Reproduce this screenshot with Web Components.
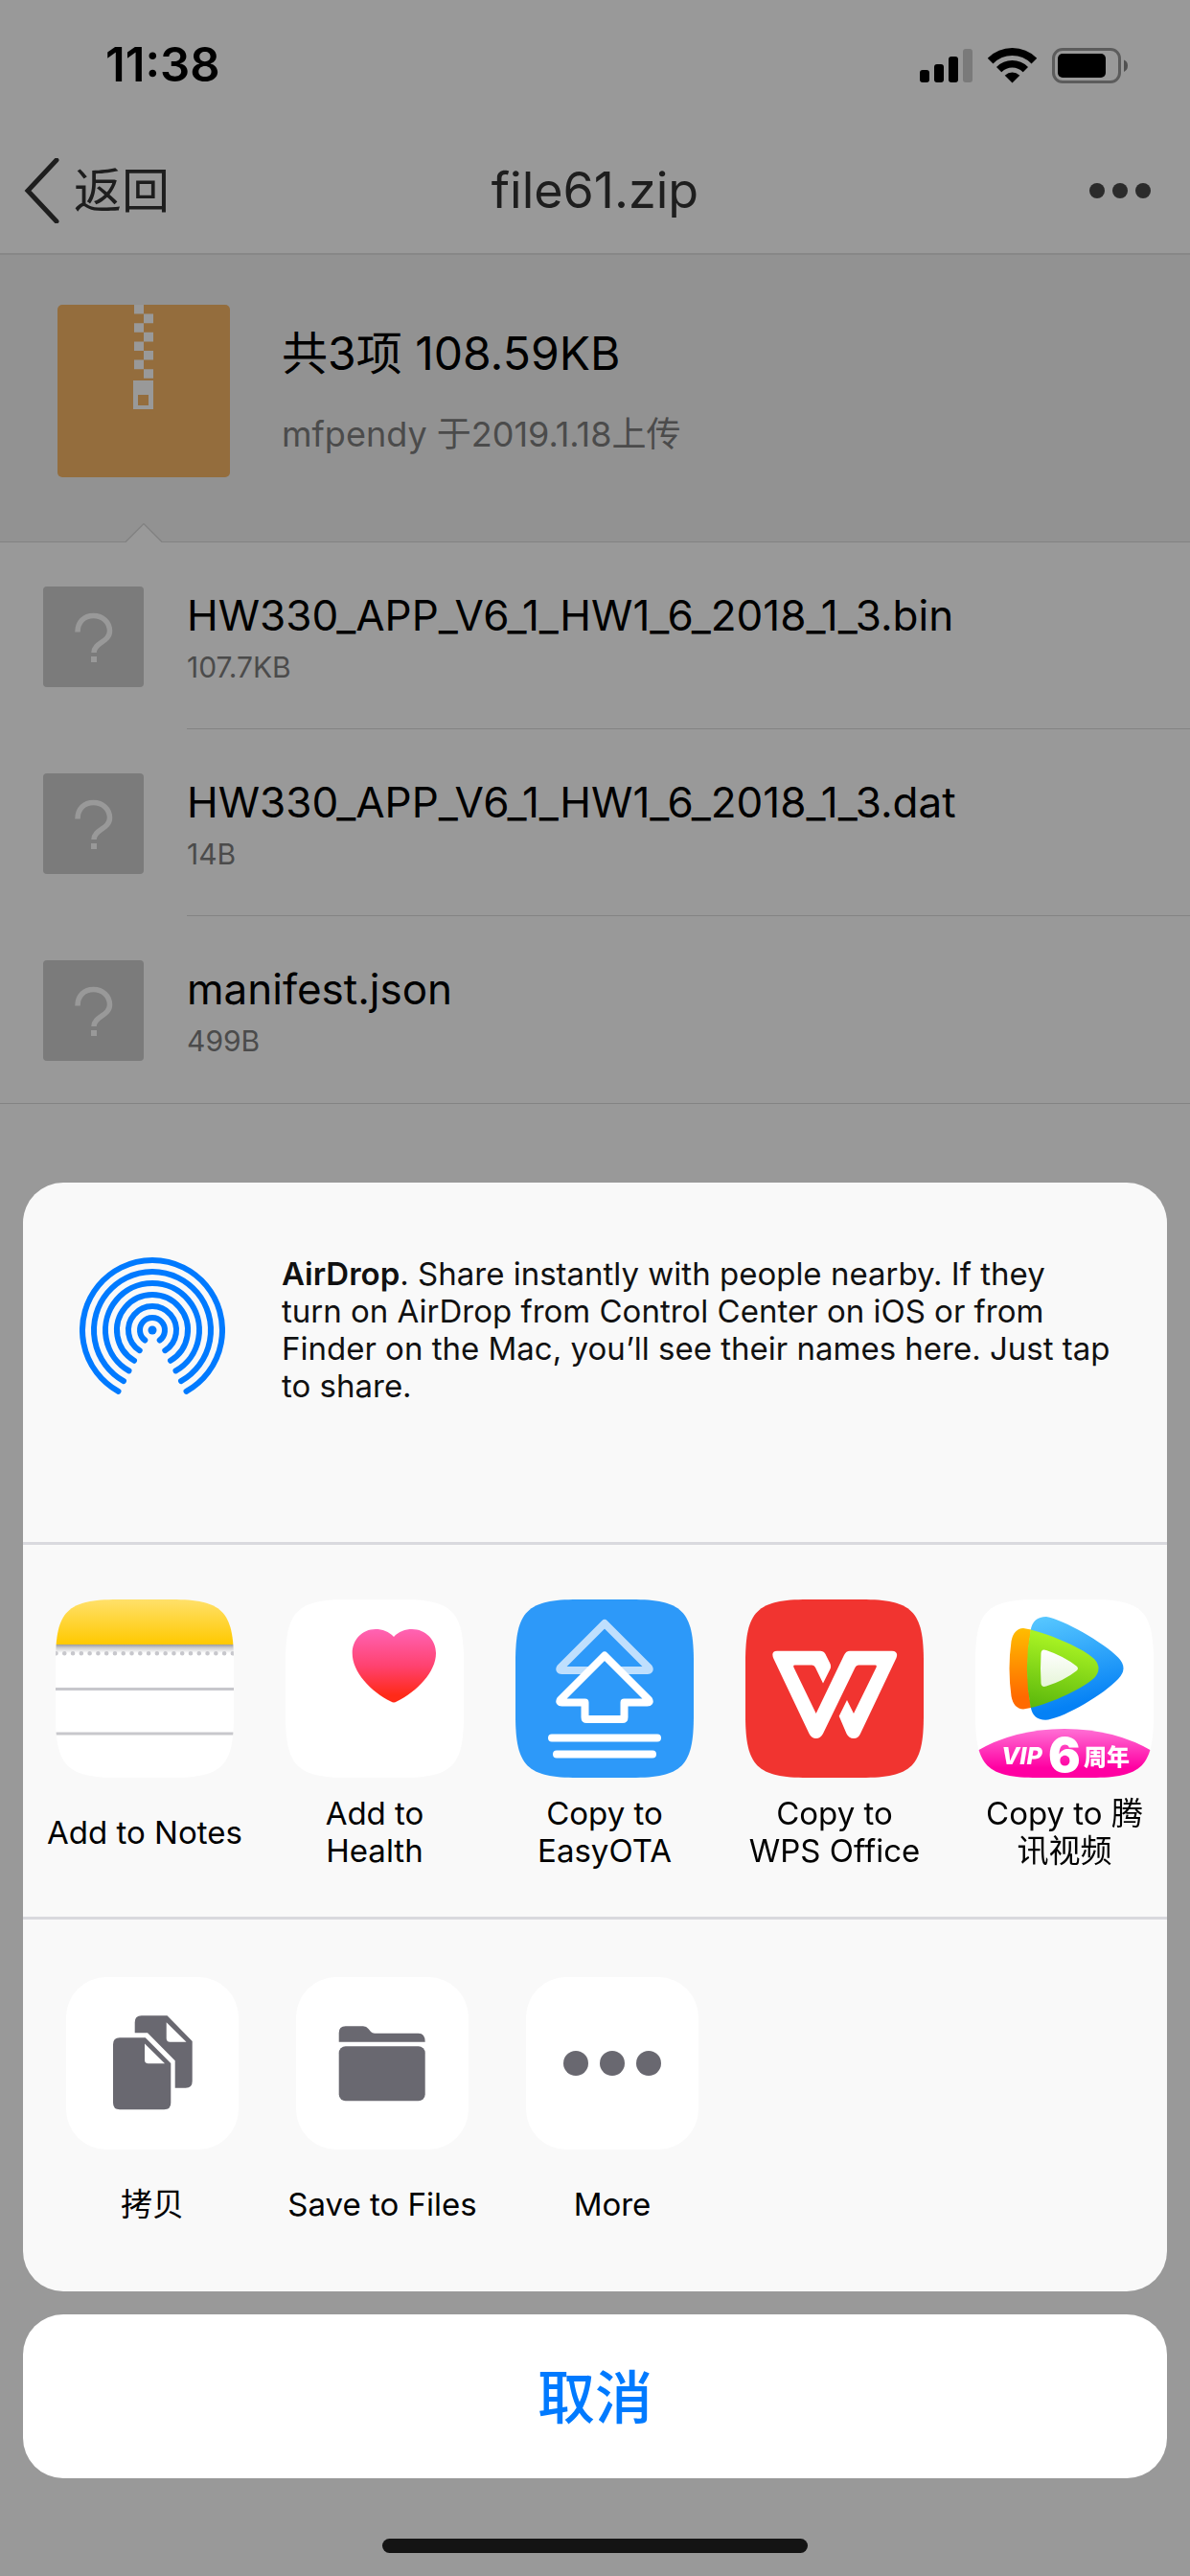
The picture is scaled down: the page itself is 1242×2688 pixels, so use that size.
<!DOCTYPE html>
<html lang="zh-CN">
<head>
<meta charset="utf-8">
<meta name="viewport" content="width=device-width, initial-scale=1">
<title>file61.zip</title>
<style>
  body {
    margin: 0;
    min-height: 100vh;
    background: #fff;
    color: #000;
    font-family: Inter, "Noto Sans CJK SC", sans-serif;
  }
</style>
</head>
<body>
<archive-page></archive-page>
<share-sheet></share-sheet>

<script>
const define = (name, html) => {
  const template = document.createElement('template');
  template.innerHTML = html;
  customElements.define(name, class extends HTMLElement {
    constructor() {
      super();
      this.attachShadow({ mode: 'open' }).append(template.content.cloneNode(true));
    }
  });
};

/* Status bar: clock, signal, wifi, battery */
define('status-bar', `
<style>
  :host { display: flex; justify-content: space-between; align-items: center; height: 128px; padding: 4px 64px 0 110px; }
  time { font-size: 49px; line-height: 60px; font-weight: 600; }
  svg { display: block; }
</style>
<time>11:38</time>
<svg width="218" height="37" viewBox="0 0 218 37" aria-hidden="true">
  <rect x="0" y="23" width="10" height="13" rx="3"/>
  <rect x="15" y="17" width="10" height="19" rx="3"/>
  <rect x="30" y="9" width="10" height="27" rx="3"/>
  <rect x="45" y="1" width="10" height="35" rx="3" fill="#ccc"/>
  <clipPath id="wedge"><path d="M96.5 36.5L60 0V-10H133V0Z"/></clipPath>
  <g clip-path="url(#wedge)" fill="none" stroke="#000">
    <circle cx="96.5" cy="36" r="32" stroke-width="8"/>
    <circle cx="96.5" cy="36" r="19.2" stroke-width="7.6"/>
    <circle cx="96.5" cy="36" r="10.5" fill="#000" stroke="none"/>
  </g>
  <rect x="139.500" y="1.500" width="69" height="34" rx="9.500" fill="none" stroke="#999" stroke-width="3"/>
  <rect x="144" y="6" width="50" height="25" rx="5"/>
  <path d="M213 12.500Q217 14 217 18.500T213 25Z" fill="#888"/>
</svg>`);

/* Navigation bar: back, title, overflow menu */
define('nav-bar', `
<style>
  :host { display: grid; grid-template-columns: 1fr auto 1fr; align-items: center; height: 130px; padding: 2px 24px 0; border-bottom: 2px solid #e2e2e2; color: #333; }
  a { display: flex; align-items: center; gap: 15px; font-size: 50px; line-height: 60px; color: inherit; text-decoration: none; }
  h1 { margin: 0; font-size: 52px; line-height: 60px; font-weight: 400; }
  button { justify-self: end; padding: 0 15px 0 0; border: 0; background: none; }
  svg { display: block; }
</style>
<a href="#back">
  <svg width="38" height="68" viewBox="0 0 38 68" fill="none" stroke="#333" stroke-width="5" stroke-linecap="round" aria-hidden="true"><path d="M35 2L5 34L35 66"/></svg>
  <span>返回</span>
</a>
<h1>file61.zip</h1>
<button type="button" aria-label="More">
  <svg width="70" height="24" viewBox="0 0 70 24" fill="#484848"><circle cx="12" cy="12" r="8"/><circle cx="36" cy="12" r="8"/><circle cx="60" cy="12" r="8"/></svg>
</button>`);

/* Summary of the archive with a notch that points at the list */
define('archive-summary', `
<style>
  :host { display: flex; align-items: center; gap: 54px; position: relative; padding: 52px 60px 67px; background: #f4f4f4; border-bottom: 1px solid #dadada; }
  .text { display: flex; flex-direction: column; gap: 30px; }
  .total { font-size: 48px; line-height: 60px; }
  .by { font-size: 36px; line-height: 48px; color: #7d7d7d; }
  svg { display: block; }
  .notch { position: absolute; left: 131px; bottom: -1px; }
</style>
<svg width="180" height="180" viewBox="0 0 180 180" aria-hidden="true">
  <rect width="180" height="180" rx="5" fill="#f7b667"/>
  <path fill="#fff" fill-rule="evenodd" d="M80 0h10v9.600h-10zM90 9.600h10v9.600h-10zM80 19.200h10v9.600h-10zM90 28.800h10v9.600h-10zM80 38.400h10v9.600h-10zM90 48h10v9.600h-10zM80 57.600h10v9.600h-10zM90 67.200h10v9.600h-10zM79 79h21v30h-21zM84 94v11h11v-11z"/>
</svg>
<div class="text">
  <div class="total">共3项 108.59KB</div>
  <div class="by">mfpendy 于2019.1.18上传</div>
</div>
<svg class="notch" width="38" height="20" viewBox="0 0 38 20" aria-hidden="true"><path d="M0 20L19 1L38 20Z" fill="#fff"/><path d="M0 19.500L19 .500L38 19.500" fill="none" stroke="#dadada" stroke-width="1.500"/></svg>`);

/* One file in the archive */
define('file-row', `
<style>
  :host { display: block; }
  a { display: flex; gap: 45px; padding-left: 45px; color: inherit; text-decoration: none; }
  .icon { padding-top: 46px; }
  svg { display: block; }
  .text { flex: 1; display: flex; flex-direction: column; justify-content: center; gap: 6px; height: 105px; padding: 46px 0 43px; border-bottom: 1px solid #dadada; }
  .name { font-size: 44px; line-height: 56px; }
  .size { font-size: 30px; line-height: 40px; color: #7d7d7d; }
  :host([last]) .text { border-bottom-color: transparent; }
  :host([last]) { box-shadow: 0 1px #dadada; }
</style>
<a href="#file">
  <div class="icon">
    <svg width="105" height="105" viewBox="0 0 105 105" aria-hidden="true">
      <rect width="105" height="105" rx="4" fill="#cdcdcd"/>
      <path d="M36 47.500C36 37 43 30.500 52.500 30.500S69.500 37 69.500 46.500C69.500 58 53 58.500 53 69" fill="none" stroke="#fff" stroke-width="5.500"/>
      <rect x="50" y="73" width="6" height="6" fill="#fff"/>
    </svg>
  </div>
  <div class="text">
    <div class="name"><slot></slot></div>
    <div class="size"><slot name="size"></slot></div>
  </div>
</a>`);

define('archive-page', `
<style>:host { display: block; }</style>
<status-bar></status-bar>
<nav-bar></nav-bar>
<archive-summary></archive-summary>
<main>
  <file-row>HW330_APP_V6_1_HW1_6_2018_1_3.bin<span slot="size">107.7KB</span></file-row>
  <file-row>HW330_APP_V6_1_HW1_6_2018_1_3.dat<span slot="size">14B</span></file-row>
  <file-row last>manifest.json<span slot="size">499B</span></file-row>
</main>`);

/* AirDrop explanation */
define('air-drop', `
<style>
  :host { display: flex; align-items: flex-start; gap: 59px; padding: 76px 32px 143px 59px; }
  svg { display: block; flex: none; margin-top: 2px; }
  p { margin: 0; font-size: 33px; line-height: 39px; color: #111; }
  span { display: block; }
  b { font-weight: 600; }
</style>
<svg width="152" height="152" viewBox="-76 -76 152 152" fill="none" stroke="#007aff" stroke-width="6" stroke-linecap="round" aria-hidden="true">
  <circle r="4.500" fill="#007aff" stroke="none"/>
  <path d="M-7.700 10.500A13 13 0 1 1 7.700 10.500"/>
  <path d="M-13.300 21.200A25 25 0 1 1 13.300 21.200"/>
  <path d="M-19 31.800A37 37 0 1 1 19 31.800"/>
  <path d="M-24.500 42.400A49 49 0 1 1 24.500 42.400"/>
  <path d="M-30 53.100A61 61 0 1 1 30 53.100"/>
  <path d="M-35.500 63.800A73 73 0 1 1 35.500 63.800"/>
</svg>
<p>
  <span><b>AirDrop</b>. Share instantly with people nearby. If they</span>
  <span>turn on AirDrop from Control Center on iOS or from</span>
  <span>Finder on the Mac, you’ll see their names here. Just tap</span>
  <span>to share.</span>
</p>`);

/* Icon tile with a one or two line label */
define('share-item', `
<style>
  :host { display: block; flex: 0 0 240px; }
  button { display: flex; flex-direction: column; align-items: center; gap: 18px; width: 100%; padding: 0; border: 0; background: none; font: inherit; color: #000; }
  .label { display: flex; flex-direction: column; justify-content: center; height: 78px; font-size: 33px; line-height: 39px; white-space: nowrap; }
  ::slotted(svg) { display: block; }
</style>
<button type="button"><slot name="icon"></slot><span class="label"><span><slot></slot></span></span></button>`);

const squircle = 'M121 0C174 0 186 12 186 65V121C186 174 174 186 121 186H65C12 186 0 174 0 121V65C0 12 12 0 65 0Z';

define('app-row', `
<style>
  :host { display: flex; padding: 57px 0 49px 7px; overflow: hidden; }
  svg { overflow: visible; }
</style>
<share-item>
  <svg slot="icon" width="186" height="186" viewBox="0 0 186 186" aria-hidden="true">
    <defs>
      <clipPath id="c1"><path d="${squircle}"/></clipPath>
      <linearGradient id="y" x2="0" y2="1"><stop stop-color="#ffe06a"/><stop offset="1" stop-color="#ffc900"/></linearGradient>
      <linearGradient id="s" x2="0" y2="1"><stop stop-color="#9c9c9e"/><stop offset=".4" stop-color="#d0d0d2"/><stop offset="1" stop-color="#fff"/></linearGradient>
    </defs>
    <g clip-path="url(#c1)">
      <rect width="186" height="186" fill="#fff"/>
      <rect width="186" height="47" fill="url(#y)"/>
      <rect y="47" width="186" height="9" fill="url(#s)"/>
      <path d="M.500 56.300H187" stroke="#c7c7cc" stroke-width="4.600" stroke-linecap="round" stroke-dasharray="0 8.780"/>
      <path d="M0 93.500H186M0 140H186" stroke="#c7c7cc" stroke-width="3"/>
    </g>
  </svg>Add to Notes
</share-item>
<share-item>
  <svg slot="icon" width="186" height="186" viewBox="0 0 186 186" aria-hidden="true">
    <linearGradient id="h" x2="0" y2="1"><stop stop-color="#ff63b4"/><stop offset=".5" stop-color="#ff4270"/><stop offset=".9" stop-color="#ff2a18"/></linearGradient>
    <path d="${squircle}" fill="#fff"/>
    <path d="M113 39C108 33.500 101 31 94 31C80 31 69.700 42 69.700 56C69.700 76 89 96 110 106.500Q113 108.500 116 106.500C137 96 157 76 157 56C157 42 146 31 132 31C125 31 118 33.500 113 39Z" fill="url(#h)"/>
  </svg>Add to<br>Health
</share-item>
<share-item>
  <svg slot="icon" width="186" height="186" viewBox="0 0 186 186" aria-hidden="true">
    <path d="${squircle}" fill="#2d99f9"/>
    <g fill="none" stroke="#fff" stroke-width="8" stroke-linecap="round" stroke-linejoin="round">
      <path d="M93 25L47 71Q45 74 48.500 74H137.500Q141 74 139 71Z" stroke="#bfdffd"/>
      <path d="M93 58.500L47 104.500Q45 107.500 48.500 107.500H72.500V123Q72.500 125 74.500 125H111.500Q113.500 125 113.500 123V107.500H137.500Q141 107.500 139 104.500Z" fill="#2d99f9"/>
      <path d="M38 144.500H148M43 161.500H143"/>
    </g>
  </svg>Copy to<br>EasyOTA
</share-item>
<share-item>
  <svg slot="icon" width="186" height="186" viewBox="0 0 186 186" aria-hidden="true">
    <path d="${squircle}" fill="#f13430"/>
    <path fill="#fff" d="M33 53.700H78Q81.500 53.700 83.500 57L88.500 67Q89.700 70 88.500 72.500L81 87.500L73 71Q72 68.500 69.500 68.500H51.500Q49.500 68.500 50.500 71L73.700 119L103 58Q105 53.700 109 53.700H153Q160 54 157.500 61L120 140Q118 145 113 145Q108 145 105.500 140L97.700 121.700L106 105L113 119L136.500 71Q137.500 68.500 135.500 68.500H118Q115.500 68.500 114.500 71L81 140Q78.500 145 73.700 145Q69 145 66.500 140L29.500 62Q26 54 33 53.700Z"/>
  </svg>Copy to<br>WPS Office
</share-item>
<share-item>
  <svg slot="icon" width="186" height="186" viewBox="0 0 186 186" aria-hidden="true">
    <defs>
      <clipPath id="c5"><path d="${squircle}"/></clipPath>
      <linearGradient id="b" x1=".1" x2=".3" y2="1"><stop stop-color="#58c8ff"/><stop offset=".9" stop-color="#0581f5"/></linearGradient>
      <linearGradient id="o" x2="0" y2="1"><stop stop-color="#ffbd00"/><stop offset=".85" stop-color="#ff6a00"/></linearGradient>
      <linearGradient id="g" x1=".4" x2=".2" y2="1"><stop offset=".1" stop-color="#a8f223"/><stop offset="1" stop-color="#5cb80c"/></linearGradient>
      <linearGradient id="w" x2="0" y2="1"><stop stop-color="#fff"/><stop offset="1" stop-color="#e6f5d8"/></linearGradient>
      <linearGradient id="p" x2="0" y2="1"><stop offset=".05" stop-color="#ff69d2"/><stop offset=".8" stop-color="#ff00a2"/></linearGradient>
    </defs>
    <g clip-path="url(#c5)">
      <rect width="186" height="186" fill="#fff"/>
      <path fill="url(#b)" d="M57.700 32Q60 18 74 18C92 21 134 45 149 60.500Q160 71.700 149 83C134 99 95 122 76 125.500Q60 127 57.700 112Q54 72 57.700 32Z"/>
      <path fill="url(#o)" d="M50 30L58 31.500Q51 72 58 113L50 114.500Q40 114 37.500 101Q33.500 72 37.500 43.500Q40 30.500 50 30Z"/>
      <path fill="url(#g)" d="M57.700 31.500C80 37 112 51 124 62Q133 72 124 82C112 93 80 108 57.700 113Q50 72 57.700 31.500Z"/>
      <path fill="url(#w)" d="M68.500 56Q69 51 74 53Q92 59 105.500 69.500Q108.500 72 105.500 74.500Q92 85 74 90.500Q69 92 68.500 87.500Q67.500 72 68.500 56Z"/>
      <path fill="url(#p)" d="M0 159Q40 135 93 135T186 159V186H0Z"/>
    </g>
    <g fill="#fff" font-family="Inter, 'Noto Sans CJK SC', sans-serif" font-weight="800">
      <text x="27" y="172" font-size="25" font-style="italic">VIP</text>
      <text x="76" y="180" font-size="50" font-weight="900">6</text>
      <text x="113" y="173" font-size="24" font-weight="900">周年</text>
    </g>
  </svg>Copy to 腾<br>讯视频
</share-item>`);

define('action-row', `
<style>
  :host { display: flex; padding: 60px 0 52px 15px; overflow: hidden; }
  svg { border-radius: 42px; background: #fff; fill: #696870; }
</style>
<share-item>
  <svg slot="icon" width="180" height="180" viewBox="0 0 180 180" aria-hidden="true">
    <path fill-rule="evenodd" d="M78.700 40.300H105.500L131.700 67V108.700Q131.700 115.700 124.700 115.700H113.700V87.300L85 58.300H71.700V47.300Q71.700 40.300 78.700 40.300ZM104.700 47.300V64Q104.700 67.700 108.400 67.700H125.500Z"/>
    <path fill-rule="evenodd" d="M56 63.300H82.700L109.300 90V131.300Q109.300 138.300 102.300 138.300H56Q49 138.300 49 131.300V70.300Q49 63.300 56 63.300ZM82 69.500V86.500Q82 90.300 85.800 90.300H103Z"/>
  </svg>拷贝
</share-item>
<share-item>
  <svg slot="icon" width="180" height="180" viewBox="0 0 180 180" aria-hidden="true">
    <path d="M44.700 67.700V58.300Q44.700 51.300 51.700 51.300H70Q73.500 51.300 75.500 54L78 57Q79.500 58.700 82 58.700H127.700Q134.700 58.700 134.700 67.700Z"/>
    <rect x="44.700" y="72.300" width="90" height="57" rx="7"/>
  </svg>Save to Files
</share-item>
<share-item>
  <svg slot="icon" width="180" height="180" viewBox="0 0 180 180" aria-hidden="true">
    <circle cx="52" cy="90" r="13"/><circle cx="90" cy="90" r="13"/><circle cx="128" cy="90" r="13"/>
  </svg>More
</share-item>`);

/* Modal layer: scrim, share panel, cancel button, home indicator */
define('share-sheet', `
<style>
  :host { position: fixed; inset: 0; display: flex; flex-direction: column; justify-content: flex-end; padding: 0 24px 24px; background: rgba(0, 0, 0, .4); }
  section { border-radius: 42px; background: #f9f9f9; overflow: hidden; }
  app-row { border-top: 3px solid #d9d9de; border-bottom: 3px solid #d9d9de; }
  .cancel { margin-top: 24px; height: 171px; padding: 0 0 6px; border: 0; border-radius: 42px; background: #fff; color: #007aff; font: inherit; font-size: 60px; font-weight: 500; }
  .home { align-self: center; width: 444px; height: 15px; margin-top: 63px; border-radius: 8px; background: #141414; }
</style>
<section role="dialog" aria-label="Share">
  <air-drop></air-drop>
  <app-row></app-row>
  <action-row></action-row>
</section>
<button class="cancel" type="button">取消</button>
<div class="home"></div>`);
</script>
</body>
</html>
